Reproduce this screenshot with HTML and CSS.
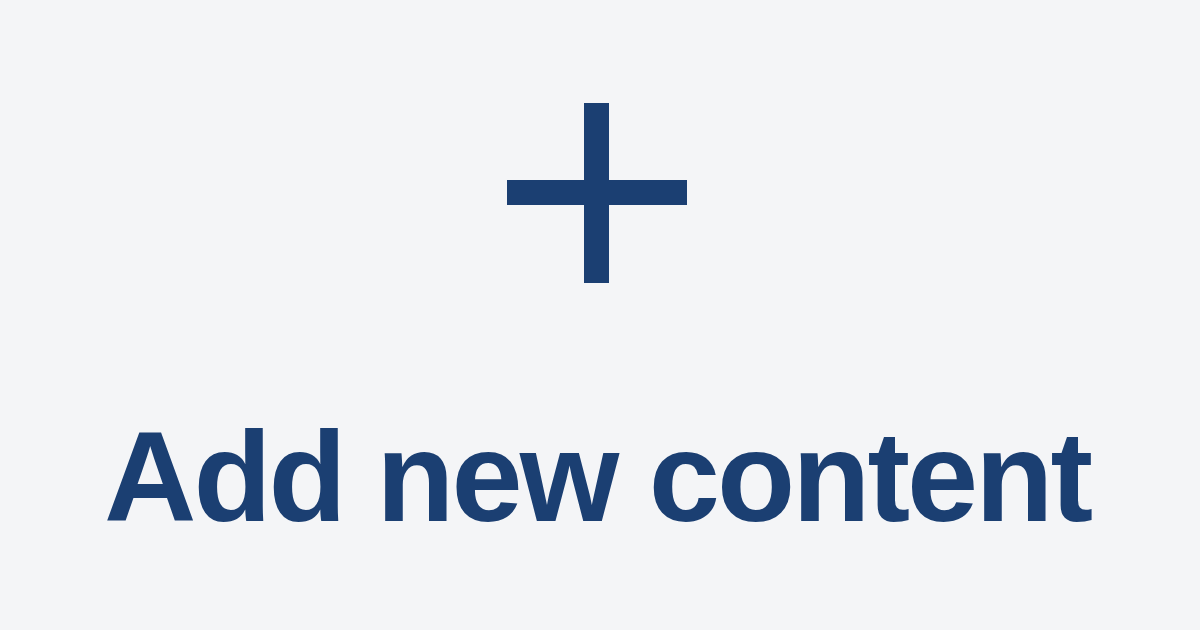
FILE: index.html
```html
<!DOCTYPE html>
<html>
<head>
<meta charset="utf-8">
<link rel="stylesheet" href="styles.css">
</head>
<body>
<main class="tile">
  <svg class="plus" width="180" height="180" viewBox="0 0 180 180" aria-hidden="true">
    <rect x="77" y="0" width="25" height="180" fill="#1b3f72"/>
    <rect x="0" y="77" width="180" height="25" fill="#1b3f72"/>
  </svg>
  <h1 class="label">Add new content</h1>
</main>
</body>
</html>
```

FILE: styles.css
```css
html, body {
  margin: 0;
  padding: 0;
  width: 1200px;
  height: 630px;
  background: #f4f5f7;
  overflow: hidden;
}
.tile {
  display: flex;
  flex-direction: column;
  align-items: center;
  padding-top: 103px;
  box-sizing: border-box;
  height: 630px;
}
.plus {
  display: block;
  margin-left: -6px;
}
.label {
  margin: 130px 0 0 -6px;
  font-family: "Liberation Sans", Arial, sans-serif;
  font-weight: 700;
  font-size: 128px;
  line-height: 128px;
  letter-spacing: -3px;
  color: #1b3f72;
  white-space: nowrap;
}
```
